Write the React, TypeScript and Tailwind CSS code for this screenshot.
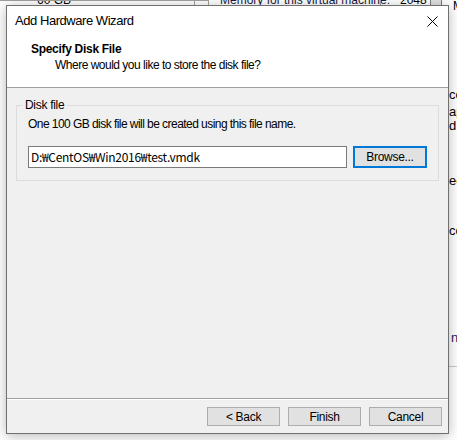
import React from "react";

const ui = { fontFamily: '"Liberation Sans", "Noto Sans CJK KR", Arial, sans-serif' };

function Btn({ label, focused }: { label: string; focused?: boolean }) {
  return (
    <div
      className={
        "flex items-center justify-center bg-[#e1e1e1] text-[12px] text-black tracking-[-0.3px] " +
        (focused ? "w-[74px] h-[22px] border-2 border-[#0078d7]" : "w-[73px] h-[19px] border border-[#adadad]")
      }
    >
      {label}
    </div>
  );
}

export default function App() {
  return (
    <div className="relative w-[457px] h-[440px] bg-white overflow-hidden" style={ui}>
      {/* background window fragments (desktop canvas) */}
      <div className="absolute left-[37px] top-[-9px] text-[12px] text-black">60 GB</div>
      <div className="absolute left-[0px] top-[0px] w-[208px] h-px bg-[#a0a0a0]" />
      <div className="absolute left-[194px] top-0 w-px h-[6px] bg-[#a0a0a0]" />
      <div className="absolute left-[208px] top-0 w-px h-[6px] bg-[#a0a0a0]" />
      <div className="absolute left-[220px] top-[-9px] text-[12px] text-[#1a1a40]">Memory for this virtual machine:</div>
      <div className="absolute left-[380px] top-0 w-px h-[6px] bg-[#a0a0a0]" />
      <div className="absolute left-[400px] top-[-9px] text-[12px] text-black">2048</div>
      <div className="absolute left-[430px] top-[-4px] w-[12px] h-[10px] border border-[#7a7a7a] bg-[#e1e1e1]" />
      <div className="absolute left-[453px] top-[-3px] text-[12px] text-black">M</div>
      <div className="absolute left-[449px] top-[88px] flex flex-col text-[13px] leading-[14px] text-black">
        <span>co</span>
        <span className="mt-[3px]">ap</span>
        <span>d</span>
        <span className="mt-[41px]">ec</span>
        <span className="mt-[36px]">co</span>
        <span className="mt-[93px] pl-[2px] text-[#1a1a60]">n</span>
      </div>
      <div className="absolute left-[449px] top-[366px] w-[8px] h-px bg-[#c8c8c8]" />

      {/* dialog window */}
      <div className="absolute left-[6px] top-[5px] w-[443px] h-[429px] flex flex-col border border-[#707070] shadow-[0_2px_12px_rgba(0,0,0,0.28)] bg-[#f0f0f0]">
        {/* title bar */}
        <div className="h-[30px] bg-white flex items-center justify-between pl-[8px] pr-[10px] shrink-0">
          <span className="text-[13px] text-black tracking-[-0.45px]">Add Hardware Wizard</span>
          <svg width="11" height="11" viewBox="0 0 11 11">
            <path d="M0.5 0.5 L10.5 10.5 M10.5 0.5 L0.5 10.5" stroke="#000" strokeWidth="1" />
          </svg>
        </div>
        {/* header */}
        <div className="h-[52px] bg-white shrink-0 pl-[24px] pt-[5px] border-b border-[#a0a0a0]">
          <div className="text-[12px] font-bold text-black leading-[16px] tracking-[-0.3px]">Specify Disk File</div>
          <div className="text-[12px] text-black leading-[16px] pl-[24px] tracking-[-0.5px]">Where would you like to store the disk file?</div>
        </div>
        {/* body */}
        <div className="flex-1 px-[9px] pt-[17px]">
          <div className="relative border border-[#dcdcdc] h-[76px] px-[11px] pt-[10px]">
            <div className="absolute left-[5px] top-[-9px] bg-[#f0f0f0] px-[3px] text-[12px] leading-[16px] text-black tracking-[-0.3px]">
              Disk file
            </div>
            <div className="text-[12px] leading-[16px] text-black tracking-[-0.55px]">
              One 100 GB disk file will be created using this file name.
            </div>
            <div className="flex items-center gap-[6px] mt-[14px]">
              <div
                className="w-[319px] h-[22px] border border-[#7a7a7a] bg-white flex items-center pl-[2px] text-[12px] text-black tracking-[-0.3px]"
                style={{ fontFamily: '"Noto Sans CJK KR", "Liberation Sans", sans-serif' }}
              >
                D:₩CentOS₩Win2016₩test.vmdk
              </div>
              <Btn label="Browse..." focused />
            </div>
          </div>
        </div>
        {/* footer */}
        <div className="h-[35px] shrink-0 border-t border-[#a0a0a0] shadow-[inset_0_1px_0_#ffffff] flex items-start justify-end gap-[8px] pt-[8px] pr-[6px]">
          <Btn label="< Back" />
          <Btn label="Finish" />
          <Btn label="Cancel" />
        </div>
      </div>
    </div>
  );
}
